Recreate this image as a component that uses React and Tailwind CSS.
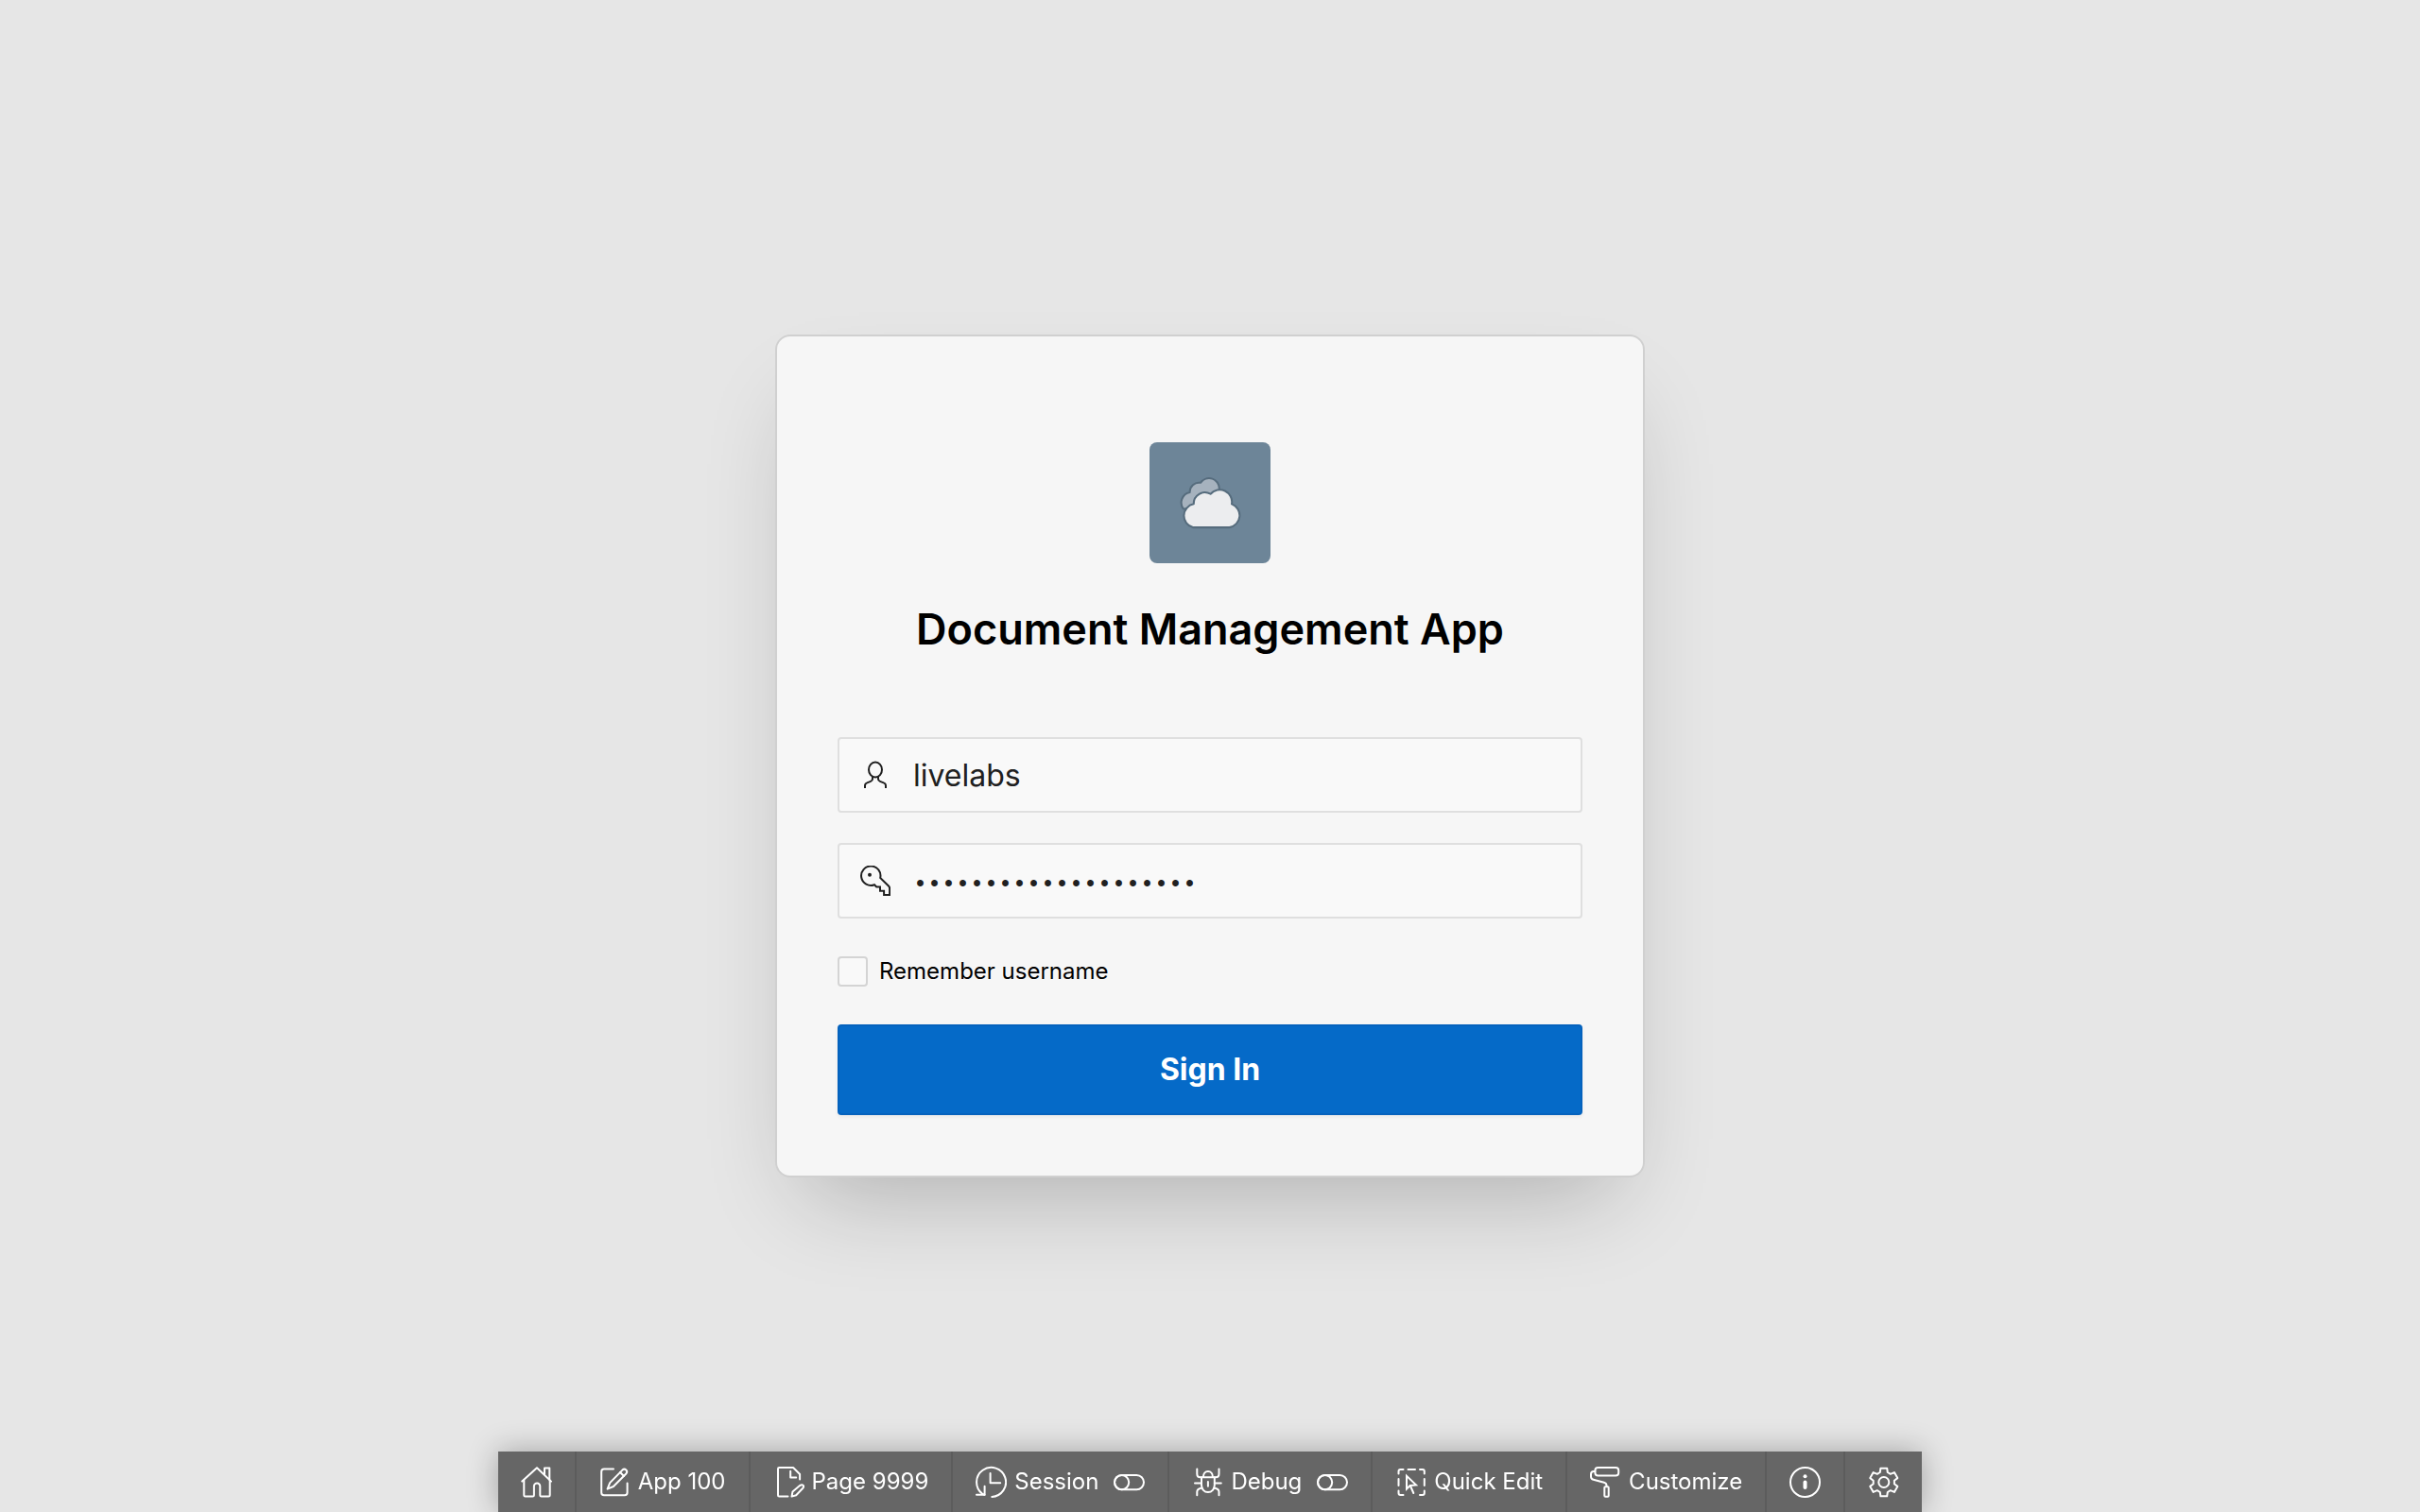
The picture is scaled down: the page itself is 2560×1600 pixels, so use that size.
function Icon({ children }) {
  return (
    <svg
      className="h-[34px] w-[33px] shrink-0"
      viewBox="0 -1 33 34"
      fill="none"
      stroke="currentColor"
      strokeWidth="2"
      strokeLinecap="round"
      strokeLinejoin="round"
      aria-hidden="true"
    >
      {children}
    </svg>
  );
}

function HomeIcon() {
  return (
    <Icon>
      <path d="M1.3 15.6 17 1.3l15 14.3" />
      <path d="M25 8V1.4h5.3v12.4" />
      <path d="M3.3 14.5v15.7q0 1.4 1.4 1.4h7.8q1.4 0 1.4-1.4v-9.4a3.2 3.2 0 0 1 6.4 0v9.4q0 1.4 1.4 1.4h7.6q1.4 0 1.4-1.4V14.5" />
    </Icon>
  );
}

function EditIcon() {
  return (
    <Icon>
      <path d="M15 2.6H5q-2.8 0-2.8 2.8v22q0 2.8 2.8 2.8h21.8q2.8 0 2.8-2.8v-10" />
      <path d="m8.6 23.6 2.6-6.5L24.4 3.6c1.3-1.2 2.7-1.2 3.9-.1 1.2 1.2 1.2 2.7 0 4L14.9 21z" />
      <path d="m22 6 4 4" />
    </Icon>
  );
}

function PageIcon() {
  return (
    <Icon>
      <path d="M15.5 31.6H6.3q-1.3 0-1.3-1.3V2.3Q5 1 6.3 1h14.8l7 7v5.5" />
      <path d="M18.2 4.7v6.7h6" />
      <path d="m19.5 31.6 1-5.2 7.6-6.3c1.3-1 2.6-1.2 3.4-.4s.6 2.2-.4 3.3l-6.9 7.2z" />
    </Icon>
  );
}

function SessionIcon() {
  return (
    <Icon>
      <path d="M17.3 31.9A15.5 15.5 0 1 0 7 28.6l2.5 1.2" />
      <path d="M1 29.8h8.6v-9" />
      <path d="M15.6 7v10.3h10.6" />
    </Icon>
  );
}

function ToggleIcon() {
  return (
    <Icon>
      <rect x="1" y="9" width="31" height="15.2" rx="7.6" />
      <circle cx="8.6" cy="16.6" r="7.6" />
    </Icon>
  );
}

function DebugIcon() {
  return (
    <Icon>
      <path d="M10 11.3h13.8v8.2c0 4.3-2.8 7.6-6.9 7.6S10 23.8 10 19.5z" />
      <path d="M11.9 11c0-3.7 2.1-6.1 5-6.1s5 2.4 5 6.1" />
      <path d="M5.3 2.5v5.3q0 3.5 3.5 3.5H10M28.5 2.5v5.3q0 3.5-3.5 3.5h-1.2" />
      <path d="M3 17.6h7M23.8 17.6h7" />
      <path d="M5.3 30.3v-3.5q0-3.5 5.3-4.3M28.5 30.3v-3.5q0-3.5-5.3-4.3" />
      <path d="M16.9 16v4.8" />
    </Icon>
  );
}

function QuickEditIcon() {
  return (
    <Icon>
      <path d="M8.5 3H5.5Q3.5 3 3.5 5V7.5M13.5 3H21M26 3h2.8q2 0 2 2v2.5M3.5 13v7M30.8 13v7M3.5 25.5V28q0 2 2 2h3M26 30h2.8q2 0 2-2v-2.5" />
      <path d="M12 9.8v13.8l3.6-3.6 6.4-.6z" strokeLinejoin="miter" />
      <path d="m16 20.5 3.3 7.5" />
    </Icon>
  );
}

function CustomizeIcon() {
  return (
    <Icon>
      <rect x="5.4" y="1" width="24.8" height="8.4" rx="3" />
      <path d="M5.4 5H4Q1 5 1 8v2.5q0 2.6 2.6 3.3l11.2 3q2.7.8 2.7 3.2v1" />
      <rect x="15.3" y="21.3" width="4.4" height="10.5" rx="1" />
    </Icon>
  );
}

function InfoIcon() {
  return (
    <Icon>
      <circle cx="16.5" cy="16.5" r="15.5" />
      <circle cx="16.5" cy="10.3" r="2" fill="currentColor" stroke="none" />
      <path d="M16.5 16.5v5.5" strokeWidth="4" />
    </Icon>
  );
}

const gearPoints = Array.from({ length: 6 }, (_, k) =>
  [[-21, 11.2], [-13, 15.2], [13, 15.2], [21, 11.2]].map(([deg, r]) => {
    const a = ((k * 60 + deg) * Math.PI) / 180;
    return `${(16.8 + r * Math.sin(a)).toFixed(1)},${(16.5 - r * Math.cos(a)).toFixed(1)}`;
  }).join(" ")
).join(" ");

function GearIcon() {
  return (
    <Icon>
      <polygon points={gearPoints} />
      <circle cx="16.8" cy="16.5" r="5.5" />
    </Icon>
  );
}

function FieldIcon({ children }) {
  return (
    <svg
      className="pointer-events-none absolute left-6 top-6 size-8 text-[#202020]"
      viewBox="0 0 32 32"
      fill="none"
      stroke="currentColor"
      strokeWidth="2"
      aria-hidden="true"
    >
      {children}
    </svg>
  );
}

function UserIcon() {
  return (
    <FieldIcon>
      <ellipse cx="16" cy="10.5" rx="7" ry="7.9" />
      <path d="M5 30v-2.5q0-2.3 2.2-3.1l3.8-1.5q2-.8 2-2.7v-2.3M27 30v-2.5q0-2.3-2.2-3.1L21 22.9q-2-.8-2-2.7v-2.3" />
    </FieldIcon>
  );
}

function KeyIcon() {
  return (
    <FieldIcon>
      <path d="M15 20.2A10.2 10.2 0 1 1 21.2 13l9 8.7q.9.9.9 2.2v7.2h-6v-4.3H21v-4.3h-3.8z" />
      <circle cx="10" cy="9.8" r="2" fill="currentColor" stroke="none" />
    </FieldIcon>
  );
}

function Logo() {
  return (
    <svg
      className="size-32 rounded-lg bg-[#6d8598]"
      viewBox="2 2 124 124"
      stroke="#566c7d"
      strokeWidth="2"
      strokeLinejoin="round"
      role="img"
      aria-label="Clouds"
    >
      <path
        d="M36.7 70.3A10.8 10.8 0 0 1 43.3 53.3A9.5 9.5 0 0 1 54.3 43.5A10.5 10.5 0 0 1 73.5 50L66 68Z"
        fill="#a6b2be"
      />
      <path
        d="M46.5 89.3A12.3 12.3 0 0 1 47.3 65.3A11.5 11.5 0 0 1 64.5 55A12.5 12.5 0 0 1 86.3 65.3A12.5 12.5 0 0 1 84 89.3Z"
        fill="#ecedef"
      />
    </svg>
  );
}

const tools = [
  { name: "Home", Glyph: HomeIcon },
  { name: "App 100", Glyph: EditIcon, text: true },
  { name: "Page 9999", Glyph: PageIcon, text: true },
  { name: "Session", Glyph: SessionIcon, text: true, toggle: true },
  { name: "Debug", Glyph: DebugIcon, text: true, toggle: true },
  { name: "Quick Edit", Glyph: QuickEditIcon, text: true },
  { name: "Customize", Glyph: CustomizeIcon, text: true },
  { name: "Info", Glyph: InfoIcon },
  { name: "Settings", Glyph: GearIcon },
];

function Toolbar() {
  return (
    <div className="fixed inset-x-0 bottom-0 flex justify-center">
      <nav
        aria-label="Developer toolbar"
        className="flex h-16 divide-x-2 divide-[#5c5c5c] bg-[#666666] text-2xl/[34px] text-white shadow-[0_0_32px_rgba(0,0,0,0.3)]"
      >
        {tools.map(({ name, Glyph, text, toggle }) => (
          <button key={name} type="button" aria-label={name} className="flex items-center px-6">
            <Glyph />
            {text && <span className="ml-2">{name}</span>}
            {toggle && (
              <span className="ml-4">
                <ToggleIcon />
              </span>
            )}
          </button>
        ))}
      </nav>
    </div>
  );
}

const fieldClass =
  "block h-20 w-full rounded border-2 border-[#dfdfdf] bg-[#f9f9f9] pl-[78px] pr-6 text-[#202020] outline-none";

export default function App() {
  return (
    <div className="min-h-screen bg-[#e6e6e6] font-['Inter',sans-serif]">
      <main className="flex min-h-screen items-center justify-center">
        <form
          onSubmit={(e) => e.preventDefault()}
          className="flex w-full max-w-[920px] flex-col rounded-2xl border-2 border-[#d0d0d0] bg-[#f6f6f6] px-16 pb-16 pt-28 shadow-[0_48px_96px_-32px_rgba(0,0,0,0.24)]"
        >
          <div className="flex justify-center">
            <Logo />
          </div>
          <h1 className="mt-10 text-center text-[45px]/[60px] font-semibold text-black">
            Document Management App
          </h1>
          <div className="relative mt-[84px]">
            <input
              className={`${fieldClass} text-[32px]`}
              type="text"
              aria-label="Username"
              defaultValue="livelabs"
            />
            <UserIcon />
          </div>
          <div className="relative mt-8">
            <input
              className={`${fieldClass} pt-2 font-['Liberation_Mono',monospace] text-[25px]`}
              type="password"
              aria-label="Password"
              defaultValue="abcdefghijklmnopqrst"
            />
            <KeyIcon />
          </div>
          <label className="mt-10 flex h-8 items-center gap-3 self-start text-2xl/[34px] text-black">
            <input
              type="checkbox"
              className="size-8 appearance-none rounded border-2 border-[#d4d4d4] bg-[#f9f9f9]"
            />
            Remember username
          </label>
          <button
            type="submit"
            className="mt-10 h-24 rounded border-2 border-[#0562bd] bg-[#056ac8] text-[32px] font-bold text-white shadow-[0_2px_4px_rgba(0,0,0,0.06)]"
          >
            Sign In
          </button>
        </form>
      </main>
      <Toolbar />
    </div>
  );
}
